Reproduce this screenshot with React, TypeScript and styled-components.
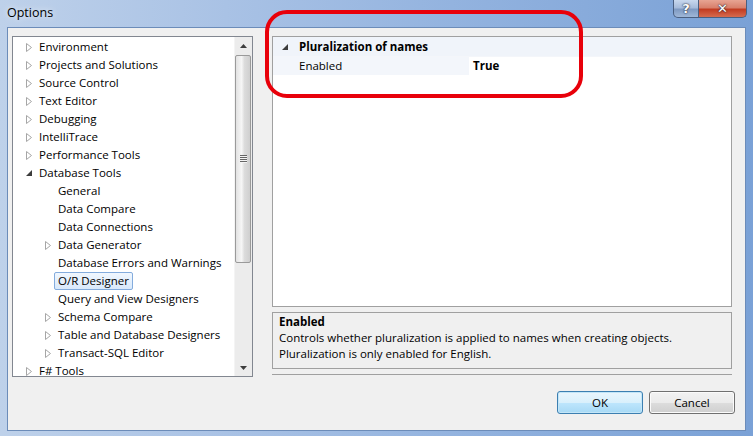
import React from 'react'
import styled, { createGlobalStyle, css } from 'styled-components'

const GlobalStyle = createGlobalStyle`
  html, body {
    margin: 0;
    padding: 0;
    background: #fff;
  }
  body {
    font-family: "Open Sans", "Noto Sans", sans-serif;
    font-size: 11.5px;
    color: #000;
  }
`

const Window = styled.div`
  position: relative;
  width: 753px;
  height: 436px;
  display: flex;
  flex-direction: column;
  box-sizing: border-box;
  background: linear-gradient(90deg, #bed1ea 0%, #a9c2e5 30%, #93b3df 60%, #7aa1d6 100%);
  overflow: hidden;
`

const TitleBar = styled.div`
  height: 27px;
  display: flex;
  align-items: flex-start;
  justify-content: space-between;
  padding: 0 6px 0 7px;
  flex-shrink: 0;
`

const Title = styled.span`
  font-size: 12.5px;
  line-height: 26px;
  color: #000;
  text-shadow: 0 0 6px rgba(255, 255, 255, 0.9);
`

const CaptionButtons = styled.div`
  display: flex;
`

const CaptionButton = styled.div<{ $close?: boolean }>`
  width: ${p => (p.$close ? 48 : 26)}px;
  height: 18px;
  box-sizing: border-box;
  display: flex;
  align-items: center;
  justify-content: center;
  border: 1px solid #4a5f80;
  border-top: none;
  color: #fff;
  font-weight: bold;
  font-size: 13px;
  font-family: "DejaVu Sans", sans-serif;
  text-shadow: 0 0 2px #223, 0 0 1px #223;
  ${p =>
    p.$close
      ? css`
          background: linear-gradient(180deg, #e7a493 0%, #d8806c 45%, #c23c22 55%, #d66b4f 100%);
          border-radius: 0 0 5px 0;
          border-left: none;
        `
      : css`
          background: linear-gradient(180deg, #c8d8ee 0%, #a7bcdb 45%, #7f9ac2 55%, #9fb7d8 100%);
          border-radius: 0 0 0 5px;
        `}
`

const Client = styled.div`
  flex: 1;
  margin: 0 7px 5px 7px;
  background: #f0f0f0;
  border: 1px solid #6c8cb9;
  padding: 8px 10px 0 4px;
  display: flex;
  flex-direction: column;
`

const Main = styled.div`
  display: grid;
  grid-template-columns: 241px 460px;
  column-gap: 19px;
`

const Tree = styled.div`
  height: 341px;
  box-sizing: border-box;
  display: flex;
  background: #fff;
  border: 1px solid #828790;
  overflow: hidden;
`

const TreeList = styled.ul`
  flex: 1;
  margin: 0;
  padding: 1px 0 0;
  list-style: none;
  overflow: hidden;
`

const TreeRow = styled.li<{ $level: number }>`
  height: 18px;
  display: flex;
  align-items: center;
  padding-left: ${p => 10 + p.$level * 19}px;
  white-space: nowrap;
`

const Expander = styled.span`
  width: 12px;
  height: 18px;
  display: flex;
  align-items: center;
  justify-content: center;
  flex-shrink: 0;
`

const TreeLabel = styled.span<{ $selected?: boolean }>`
  padding: 0 3px;
  height: 16px;
  line-height: 16px;
  border: 1px solid transparent;
  border-radius: 2px;
  ${p =>
    p.$selected &&
    css`
      background: linear-gradient(180deg, #f1f7fe 0%, #d9e9fb 100%);
      border-color: #84acdd;
    `}
`

const ScrollBar = styled.div`
  width: 17px;
  display: flex;
  flex-direction: column;
  background: #ececec;
  border-left: 1px solid #f4f4f4;
`

const ScrollArrow = styled.div`
  height: 17px;
  display: flex;
  align-items: center;
  justify-content: center;
  flex-shrink: 0;
`

const ScrollTrack = styled.div`
  flex: 1;
  padding-top: 1px;
`

const Thumb = styled.div`
  height: 208px;
  margin: 0 1px 0 0;
  box-sizing: border-box;
  border: 1px solid #9a9a9a;
  border-radius: 2px;
  background: linear-gradient(90deg, #e2e2e2 0%, #f6f6f6 40%, #dcdcdc 60%, #cfcfcf 100%);
  display: flex;
  align-items: center;
  justify-content: center;
`

const Grip = styled.div`
  width: 7px;
  height: 8px;
  background: repeating-linear-gradient(180deg, #666 0 1px, #f4f4f4 1px 2px);
`

const RightColumn = styled.div`
  display: flex;
  flex-direction: column;
`

const PropGrid = styled.div`
  height: 271px;
  box-sizing: border-box;
  border: 1px solid #a0a0a0;
  background: #fff;
`

const CategoryRow = styled.div`
  height: 19px;
  display: flex;
  align-items: center;
  background: #f0f4fa;
  font-weight: bold;
  padding-left: 9px;
`

const CategoryExpander = styled.span`
  width: 17px;
  display: flex;
  align-items: center;
`

const PropRow = styled.div`
  height: 18px;
  display: grid;
  grid-template-columns: 196px 1fr;
  border-top: 1px solid #f4f6fa;
`

const PropName = styled.div`
  background: #f3f6fb;
  padding-left: 26px;
  line-height: 18px;
`

const PropValue = styled.div`
  padding-left: 4px;
  line-height: 18px;
  font-weight: bold;
`

const Description = styled.div`
  margin-top: 5px;
  height: 57px;
  box-sizing: border-box;
  border: 1px solid #a0a0a0;
  background: #f0f0f0;
  padding: 1px 6px;
  line-height: 16px;
`

const DescTitle = styled.div`
  font-weight: bold;
`

const Separator = styled.div`
  margin-top: 5px;
  border-top: 1px solid #a0a0a0;
`

const ButtonRow = styled.div`
  display: flex;
  justify-content: flex-end;
  gap: 6px;
  margin-top: 14px;
`

const Button = styled.button<{ $default?: boolean }>`
  width: 86px;
  height: 23px;
  font: inherit;
  color: #000;
  border-radius: 3px;
  padding: 0;
  ${p =>
    p.$default
      ? css`
          border: 1px solid #3c7fb1;
          background: linear-gradient(180deg, #eaf6fd 0%, #d9f0fc 50%, #bee6fd 51%, #a7d9f5 100%);
          box-shadow: inset 0 0 0 1px #c3e6f8;
        `
      : css`
          border: 1px solid #707070;
          background: linear-gradient(180deg, #f2f2f2 0%, #ebebeb 50%, #dddddd 51%, #cfcfcf 100%);
          box-shadow: inset 0 0 0 1px #fbfbfb;
        `}
`

const Annotation = styled.div`
  position: absolute;
  left: 265px;
  top: 10px;
  width: 318px;
  height: 88px;
  box-sizing: border-box;
  border: 4px solid #e8000a;
  border-radius: 22px;
  pointer-events: none;
`

const Collapsed = () => (
  <svg width="6" height="9" viewBox="0 0 6 9">
    <polygon points="0.5,0.5 5.5,4.5 0.5,8.5" fill="#fff" stroke="#a6a6a6" />
  </svg>
)

const Expanded = () => (
  <svg width="6" height="6" viewBox="0 0 6 6">
    <polygon points="6,0 6,6 0,6" fill="#3c3c3c" />
  </svg>
)

type Node = { label: string; level: number; kind?: 'collapsed' | 'expanded'; selected?: boolean }

const nodes: Node[] = [
  { label: 'Environment', level: 0, kind: 'collapsed' },
  { label: 'Projects and Solutions', level: 0, kind: 'collapsed' },
  { label: 'Source Control', level: 0, kind: 'collapsed' },
  { label: 'Text Editor', level: 0, kind: 'collapsed' },
  { label: 'Debugging', level: 0, kind: 'collapsed' },
  { label: 'IntelliTrace', level: 0, kind: 'collapsed' },
  { label: 'Performance Tools', level: 0, kind: 'collapsed' },
  { label: 'Database Tools', level: 0, kind: 'expanded' },
  { label: 'General', level: 1 },
  { label: 'Data Compare', level: 1 },
  { label: 'Data Connections', level: 1 },
  { label: 'Data Generator', level: 1, kind: 'collapsed' },
  { label: 'Database Errors and Warnings', level: 1 },
  { label: 'O/R Designer', level: 1, selected: true },
  { label: 'Query and View Designers', level: 1 },
  { label: 'Schema Compare', level: 1, kind: 'collapsed' },
  { label: 'Table and Database Designers', level: 1, kind: 'collapsed' },
  { label: 'Transact-SQL Editor', level: 1, kind: 'collapsed' },
  { label: 'F# Tools', level: 0, kind: 'collapsed' },
]

const App = () => {
  return (
    <>
      <GlobalStyle />
      <Window>
        <TitleBar>
          <Title>Options</Title>
          <CaptionButtons>
            <CaptionButton>?</CaptionButton>
            <CaptionButton $close>✕</CaptionButton>
          </CaptionButtons>
        </TitleBar>
        <Client>
          <Main>
            <Tree>
              <TreeList>
                {nodes.map((n, i) => (
                  <TreeRow key={i} $level={n.level}>
                    <Expander>
                      {n.kind === 'collapsed' && <Collapsed />}
                      {n.kind === 'expanded' && <Expanded />}
                    </Expander>
                    <TreeLabel $selected={n.selected}>{n.label}</TreeLabel>
                  </TreeRow>
                ))}
              </TreeList>
              <ScrollBar>
                <ScrollArrow>
                  <svg width="7" height="4" viewBox="0 0 7 4">
                    <polygon points="3.5,0 7,4 0,4" fill="#3d3d3d" />
                  </svg>
                </ScrollArrow>
                <ScrollTrack>
                  <Thumb>
                    <Grip />
                  </Thumb>
                </ScrollTrack>
                <ScrollArrow>
                  <svg width="7" height="4" viewBox="0 0 7 4">
                    <polygon points="0,0 7,0 3.5,4" fill="#3d3d3d" />
                  </svg>
                </ScrollArrow>
              </ScrollBar>
            </Tree>
            <RightColumn>
              <PropGrid>
                <CategoryRow>
                  <CategoryExpander>
                    <Expanded />
                  </CategoryExpander>
                  Pluralization of names
                </CategoryRow>
                <PropRow>
                  <PropName>Enabled</PropName>
                  <PropValue>True</PropValue>
                </PropRow>
              </PropGrid>
              <Description>
                <DescTitle>Enabled</DescTitle>
                <div>Controls whether pluralization is applied to names when creating objects.</div>
                <div>Pluralization is only enabled for English.</div>
              </Description>
              <Separator />
            </RightColumn>
          </Main>
          <ButtonRow>
            <Button $default>OK</Button>
            <Button>Cancel</Button>
          </ButtonRow>
        </Client>
        <Annotation />
      </Window>
    </>
  )
}

export default App
